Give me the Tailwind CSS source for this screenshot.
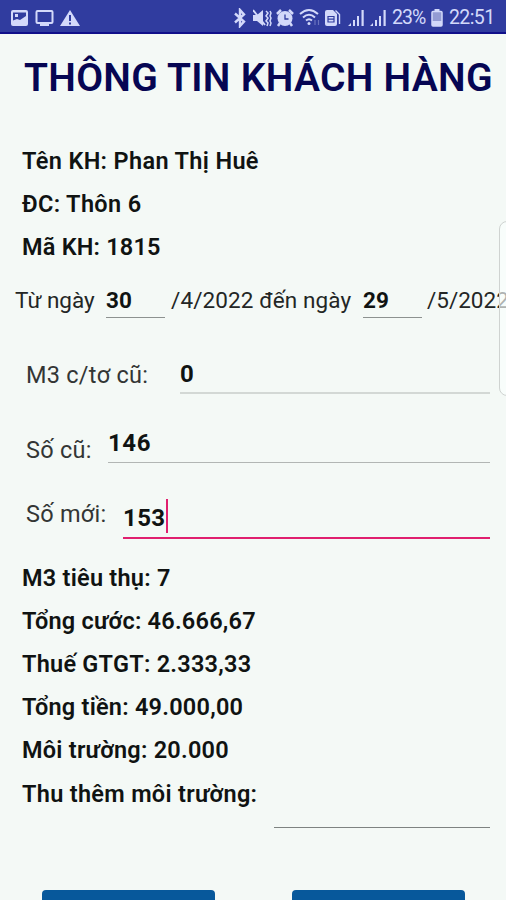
<!DOCTYPE html>
<html lang="vi">
  <head>
    <meta charset="UTF-8" />
    <title>Thông tin khách hàng</title>
    <script src="https://cdn.jsdelivr.net/npm/@tailwindcss/browser@4"></script>
  </head>
  <body class="relative w-[506px] h-[900px] overflow-hidden bg-[#f4f9f6] text-[#101312] font-['Roboto','Noto_Sans',sans-serif]">
    <!-- STATUS BAR -->
    <header class="flex items-center h-[34px] bg-[#303c9f] border-b-2 border-[#10108a] pt-[3px] pl-[10px] pr-[11px] text-[#d3d9fa]">
      <svg class="w-[19px] h-[18px]" viewBox="0 0 19 18" fill="currentColor">
        <path fill-rule="evenodd" d="M3 1h13q2 0 2 2v12q0 2-2 2H3q-2 0-2-2V3q0-2 2-2zM3 3.500v8l4-1.500 3 1 6-4V3.500z" />
        <path d="M5 5h3v3H5z" />
      </svg>
      <svg class="w-[19px] h-[18px] ml-[6px]" viewBox="0 0 19 18" fill="none" stroke="currentColor" stroke-width="2">
        <rect x="1.500" y="2" width="16" height="12" rx="1" />
        <path d="M5 16h9" />
      </svg>
      <svg class="w-[20px] h-[18px] ml-[6px]" viewBox="0 0 20 18" fill="currentColor">
        <path fill-rule="evenodd" d="M10 1l10 16H0zM9 6v6h2V6zM9 13.500v2h2v-2z" />
      </svg>

      <div class="flex items-center ml-auto">
        <svg class="w-[14px] h-[20px]" viewBox="1 0 14 20" fill="none" stroke="currentColor" stroke-width="2.400">
          <path d="M2 5.500l9 8-4 4.500V2l4 4.500-9 8" />
        </svg>
        <svg class="w-[20px] h-[18px] ml-[5px]" viewBox="1 0 20 18" fill="none" stroke="currentColor" stroke-width="1.800">
          <path fill="currentColor" stroke="none" d="M1 6h4l6-5v16l-6-5H1z" />
          <path d="M1 1l12 15" stroke-width="2" />
          <path d="M14 2l2 2-2 3 2 2-2 3 2 2-1 3M18 2l1 2-1 3 1 2-1 3 1 2-1 3" stroke-width="1.500" />
        </svg>
        <svg class="w-[18px] h-[18px] ml-[3px]" viewBox="0 0 18 18" fill="none" stroke="currentColor">
          <path d="M1 5l4-4M13 1l4 4M4 14l-2 3M14 14l2 3" stroke-width="2.500" />
          <circle cx="9" cy="9.500" r="7.500" fill="currentColor" stroke="none" />
          <path d="M9 5.500v4.500h3.500" stroke="#303c9f" stroke-width="1.300" />
        </svg>
        <svg class="w-[22px] h-[19px] ml-[5px]" viewBox="0 0 22 19" fill="none" stroke="currentColor" stroke-width="2">
          <path d="M1 6Q10-2 19 6M4 9.500q6-5.500 12 0M7 12.500q3-2.500 6 0" />
          <circle cx="10" cy="15.500" r="1.500" fill="currentColor" stroke="none" />
          <path d="M16 12v5M19.500 12v5" stroke-width="1.200" stroke-opacity=".35" />
        </svg>
        <svg class="w-[18px] h-[18px] ml-[3px]" viewBox="0 0 18 18" fill="currentColor">
          <path d="M3 1h6l4 4v10q0 2-2 2H3q-2 0-2-2V3q0-2 2-2z" />
          <path d="M11.500 1.500l4 4V15" fill="none" stroke="currentColor" stroke-width="1.400" />
          <path d="M4 7.500h6v5.500H4zM4 10.200h6" fill="none" stroke="#303c9f" stroke-width="1.200" />
        </svg>
        <svg class="w-[17px] h-[18px] ml-[6px]" viewBox="0 0 17 18" fill="currentColor">
          <path d="M0 17l3-3v3zM5 11h2v6H5zM9 7h2v10H9zM13.500 1h2.200v16h-2.200z" />
        </svg>
        <svg class="w-[17px] h-[18px] ml-[5px]" viewBox="0 0 17 18" fill="currentColor">
          <path d="M0 17l3-3v3zM5 11h2v6H5zM9 7h2v10H9zM13.500 1h2.200v16h-2.200z" />
        </svg>
        <span class="ml-[5px] w-[34px] text-[19.5px] tracking-[-0.9px] whitespace-nowrap">23%</span>
        <svg class="w-[12px] h-[18px] ml-[5px]" viewBox="0 0 12 18" fill="currentColor">
          <path d="M3.500 0h5v3h-5z" />
          <rect x="1" y="2.500" width="10" height="14.500" rx="1" fill="#939bd3" stroke="currentColor" stroke-width="1.500" />
          <path d="M1 12h10v5H1z" />
        </svg>
        <span class="ml-[6px] w-[46px] text-[19.5px] tracking-[-0.6px] whitespace-nowrap">22:51</span>
      </div>
    </header>

    <main>
      <h1 class="mt-[21px] ml-[24px] h-[46px] leading-[46px] text-[39px] font-semibold tracking-[0.28px] text-[#060653] whitespace-nowrap">THÔNG TIN KHÁCH HÀNG</h1>

      <!-- CUSTOMER -->
      <section class="mt-[39px] pl-[22px] text-[23.5px] leading-[43.2px] tracking-[0.35px] font-semibold">
        <p>Tên KH: Phan Thị Huê</p>
        <p>ĐC: Thôn 6</p>
        <p class="tracking-[0.2px]">Mã KH: 1815</p>
      </section>

      <!-- BILLING PERIOD -->
      <section class="flex mt-[15px] h-[33px] pl-[15px] text-[22.5px] leading-[30px] whitespace-nowrap text-[#232625]">
        <span class="shrink-0 w-[91px]">Từ ngày</span>
        <span class="shrink-0 w-[59px] border-b-[1.5px] border-[#8d9290] font-bold leading-[30px] text-[#101312]">30</span>
        <span class="shrink-0 ml-[6px] w-[192px] tracking-[0.1px]">/4/2022 đến ngày</span>
        <span class="shrink-0 w-[59px] border-b-[1.5px] border-[#8d9290] font-bold leading-[30px] text-[#101312]">29</span>
        <span class="shrink-0 ml-[5px]">/5/2022</span>
      </section>

      <!-- METER READINGS -->
      <section class="pl-[26px] pr-[16px] text-[23.5px] leading-[30px] tracking-[0.25px] whitespace-nowrap">
        <div class="flex mt-[39px] h-[37px]">
          <span class="pt-[3px] w-[154px] text-[#333635]">M3 c/tơ cũ:</span>
          <span class="flex-1 pt-[2px] border-b-2 border-[#d3d8d5] font-bold text-[24px]">0</span>
        </div>
        <div class="flex mt-[32px] h-[37px]">
          <span class="pt-[9px] w-[82px] text-[#333635]">Số cũ:</span>
          <span class="flex-1 pt-[2px] border-b-[1.5px] border-[#b2b6b4] font-bold text-[24px] tracking-[0.6px]">146</span>
        </div>
        <div class="flex mt-[36px] h-[40px]">
          <span class="w-[97px] text-[#333635]">Số mới:</span>
          <span class="flex flex-1 pt-[4px] border-b-2 border-[#e0206f] font-bold text-[24px] tracking-[0.4px]">153<i class="block w-[2px] h-[34px] -mt-[4px] bg-[#e0206f]"></i></span>
        </div>
      </section>

      <!-- TOTALS -->
      <section class="mt-[18px] pl-[22px] text-[23.5px] leading-[43.2px] tracking-[0.24px] font-semibold whitespace-nowrap">
        <p>M3 tiêu thụ: 7</p>
        <p>Tổng cước: 46.666,67</p>
        <p>Thuế GTGT: 2.333,33</p>
        <p>Tổng tiền: 49.000,00</p>
        <p>Môi trường: 20.000</p>
        <p class="tracking-[0.3px]">Thu thêm môi trường:</p>
      </section>
      <div class="mt-[11px] ml-[274px] w-[216px] h-[1.5px] bg-[#7e8381]"></div>

      <div class="flex gap-[77px] mt-[62px] ml-[42px]">
        <button class="w-[173px] h-[48px] rounded-[4px] bg-[#07589b]"></button>
        <button class="w-[173px] h-[48px] rounded-[4px] bg-[#07589b]"></button>
      </div>
    </main>

    <!-- edge panel handle -->
    <div class="absolute left-[499px] top-[221px] w-[20px] h-[175px] rounded-[8px] border-[1.5px] border-[#cfd3d1] bg-[#fbfffd]/65"></div>
  </body>
</html>
